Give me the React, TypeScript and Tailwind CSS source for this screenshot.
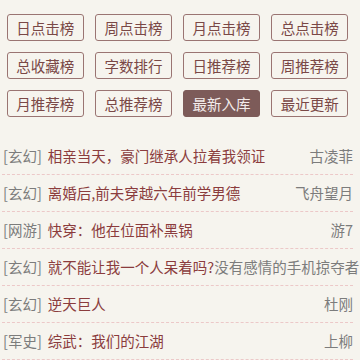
import React from "react";

const tabs = [
  "日点击榜", "周点击榜", "月点击榜", "总点击榜",
  "总收藏榜", "字数排行", "日推荐榜", "周推荐榜",
  "月推荐榜", "总推荐榜", "最新入库", "最近更新",
];

const books = [
  { cat: "玄幻", title: "相亲当天，豪门继承人拉着我领证", author: "古凌菲" },
  { cat: "玄幻", title: "离婚后,前夫穿越六年前学男德", author: "飞舟望月" },
  { cat: "网游", title: "快穿：他在位面补黑锅", author: "游7" },
  { cat: "玄幻", title: "就不能让我一个人呆着吗?", author: "没有感情的手机掠夺者" },
  { cat: "玄幻", title: "逆天巨人", author: "杜刚" },
  { cat: "军史", title: "综武：我们的江湖", author: "上柳" },
];

export default function App() {
  return (
    <div
      className="w-[360px] h-[360px] overflow-hidden bg-[#f6f4ee]"
      style={{ fontFamily: '"Noto Sans CJK SC", "Noto Sans", sans-serif' }}
    >
      {/* rank tabs */}
      <div className="grid grid-cols-4 gap-x-[11.5px] gap-y-[11px] pt-[14px] pl-[7px] pr-[12px]">
        {tabs.map((t) => {
          const active = t === "最新入库";
          return (
            <div
              key={t}
              className={
                active
                  ? "h-[27px] flex items-center justify-center rounded-[3px] border border-[#7d5b59] bg-[#7d5b59] text-[14.5px] text-[#f3eceb]"
                  : "h-[27px] flex items-center justify-center rounded-[3px] border border-[#9a7472] text-[14.5px] text-[#7a4846]"
              }
            >
              {t}
            </div>
          );
        })}
      </div>

      {/* book list */}
      <div className="mt-[21px] pl-[2px] pr-[7px]">
        {books.map((b, i) => (
          <div
            key={i}
            className="h-[37px] flex items-center justify-between border-b border-dashed border-[#ecc8c8] text-[14.5px] leading-none"
          >
            <div className="flex items-center whitespace-nowrap pl-[1px]">
              <span className="text-[#7c7c7c]">[{b.cat}]</span>
              <span className="ml-[6px] text-[#8b3c3d]">{b.title}</span>
            </div>
            <span className="text-[#7c7c7c] whitespace-nowrap">{b.author}</span>
          </div>
        ))}
      </div>
    </div>
  );
}
